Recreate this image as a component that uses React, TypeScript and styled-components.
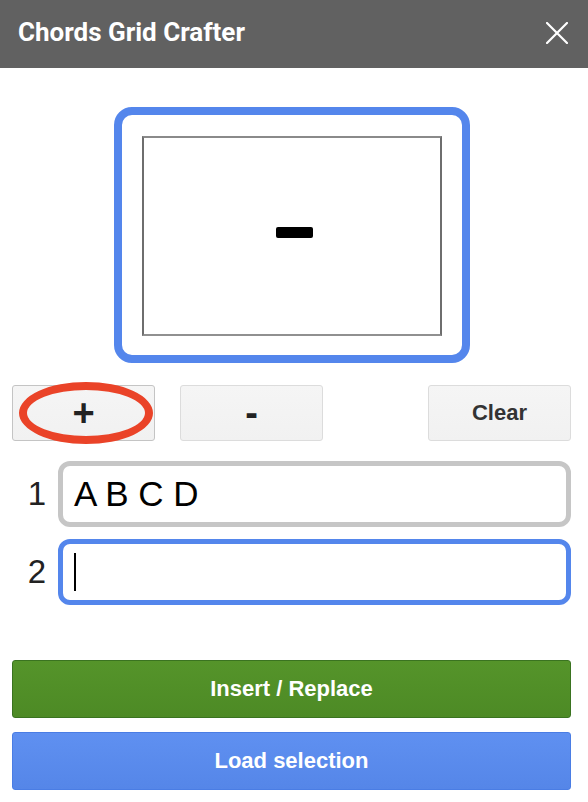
import styled, { createGlobalStyle } from 'styled-components'

const GlobalStyle = createGlobalStyle`
  html, body {
    margin: 0;
    padding: 0;
    background: #ffffff;
  }
  body {
    font-family: "Liberation Sans", Arial, sans-serif;
    width: 588px;
    height: 802px;
    overflow: hidden;
  }
`

const rows = ['A B C D', '']

const App = () => {
  return (
    <>
      <GlobalStyle />
      <Page>
        <TitleBar>
          <Title>Chords Grid Crafter</Title>
          <CloseButton aria-label="Close">
            <svg width="22" height="22" viewBox="0 0 22 22">
              <path d="M1 1 L21 21 M21 1 L1 21" stroke="#ffffff" strokeWidth="2.2" strokeLinecap="square" />
            </svg>
          </CloseButton>
        </TitleBar>

        <Body>
          <PreviewRow>
            <PreviewFrame>
              <GridCanvas>
                <Dash />
              </GridCanvas>
            </PreviewFrame>
          </PreviewRow>

          <ToolRow>
            <ToolButton $dark $big>
              +
              <Highlight />
            </ToolButton>
            <ToolButton $big>-</ToolButton>
            <ToolButton $push>Clear</ToolButton>
          </ToolRow>

          <Rows>
            {rows.map((text, i) => (
              <ChordRow key={i}>
                <RowNumber>{i + 1}</RowNumber>
                <Field $active={i === rows.length - 1}>
                  {text}
                  {i === rows.length - 1 && <Caret />}
                </Field>
              </ChordRow>
            ))}
          </Rows>

          <ActionButton $variant="green">Insert / Replace</ActionButton>
          <ActionButton $variant="blue">Load selection</ActionButton>
        </Body>
      </Page>
    </>
  )
}

export default App

const Page = styled.div`
  width: 588px;
  min-height: 802px;
  background: #ffffff;
`

const TitleBar = styled.header`
  height: 68px;
  background: #616161;
  display: flex;
  align-items: center;
  justify-content: space-between;
  padding: 0 20px 0 18px;
  box-sizing: border-box;
`

const Title = styled.h1`
  margin: 0 0 4px 0;
  font-family: Roboto, "Liberation Sans", sans-serif;
  font-weight: 700;
  font-size: 26px;
  color: #ffffff;
`

const CloseButton = styled.button`
  border: none;
  background: transparent;
  padding: 0;
  width: 22px;
  height: 22px;
  display: flex;
  margin-bottom: 2px;
`

const Body = styled.main`
  padding: 39px 17px 0 12px;
  display: flex;
  flex-direction: column;
`

const PreviewRow = styled.div`
  display: flex;
  justify-content: center;
`

const PreviewFrame = styled.div`
  width: 356px;
  height: 256px;
  box-sizing: border-box;
  border: 8px solid #5486ec;
  border-radius: 18px;
  padding: 21px 20px 19px 20px;
`

const GridCanvas = styled.div`
  width: 300px;
  height: 200px;
  box-sizing: border-box;
  border: 2px solid #6e6e6e;
  border-top-color: #8a8a8a;
  border-bottom-color: #909090;
  display: flex;
  align-items: center;
  justify-content: center;
`

const Dash = styled.div`
  width: 37px;
  height: 11px;
  background: #000000;
  border-radius: 2px;
  margin: 0 0 8px 6px;
`

const ToolRow = styled.div`
  display: flex;
  gap: 25px;
  margin-top: 22px;
`

const ToolButton = styled.button<{ $dark?: boolean; $push?: boolean; $big?: boolean }>`
  position: relative;
  width: 143px;
  height: 56px;
  box-sizing: border-box;
  border: 1px solid ${(p) => (p.$dark ? '#c4c4c4' : '#dcdcdc')};
  border-radius: 3px;
  background: linear-gradient(#f5f5f5, #f1f1f1);
  font-family: "Liberation Sans", Arial, sans-serif;
  font-weight: 700;
  font-size: ${(p) => (p.$big ? '38px' : '22px')};
  line-height: 1;
  color: ${(p) => (p.$big ? '#222222' : '#333333')};
  margin-left: ${(p) => (p.$push ? 'auto' : '0')};
  padding: 0;
  display: flex;
  align-items: center;
  justify-content: center;
`

const Highlight = styled.span`
  position: absolute;
  left: 6px;
  top: -4px;
  width: 134px;
  height: 62px;
  box-sizing: border-box;
  border: 8px solid #ea4328;
  border-radius: 50%;
  pointer-events: none;
`

const Rows = styled.div`
  display: flex;
  flex-direction: column;
  gap: 12px;
  margin-top: 20px;
`

const ChordRow = styled.div`
  display: flex;
  align-items: center;
`

const RowNumber = styled.span`
  width: 46px;
  padding-right: 12px;
  box-sizing: border-box;
  text-align: right;
  font-size: 33px;
  color: #222222;
`

const Field = styled.div<{ $active?: boolean }>`
  flex: 1;
  height: 66px;
  box-sizing: border-box;
  border: 5px solid ${(p) => (p.$active ? '#5486ec' : '#c6c6c6')};
  border-radius: 12px;
  padding: 0 11px 0 11px;
  display: flex;
  align-items: center;
  font-size: 35px;
  color: #000000;
  white-space: pre;
`

const Caret = styled.span`
  width: 2px;
  height: 38px;
  background: #000000;
`

const ActionButton = styled.button<{ $variant: 'green' | 'blue' }>`
  height: 58px;
  box-sizing: border-box;
  border-radius: 3px;
  border: 1px solid ${(p) => (p.$variant === 'green' ? '#3a7320' : '#4a7de4')};
  background: ${(p) =>
    p.$variant === 'green'
      ? 'linear-gradient(#55942a, #4d8a25)'
      : 'linear-gradient(#5f90f1, #5586e8)'};
  color: #ffffff;
  font-family: "Liberation Sans", Arial, sans-serif;
  font-weight: 700;
  font-size: 22px;
  margin-top: ${(p) => (p.$variant === 'green' ? '55px' : '14px')};
  padding: 0;
`
